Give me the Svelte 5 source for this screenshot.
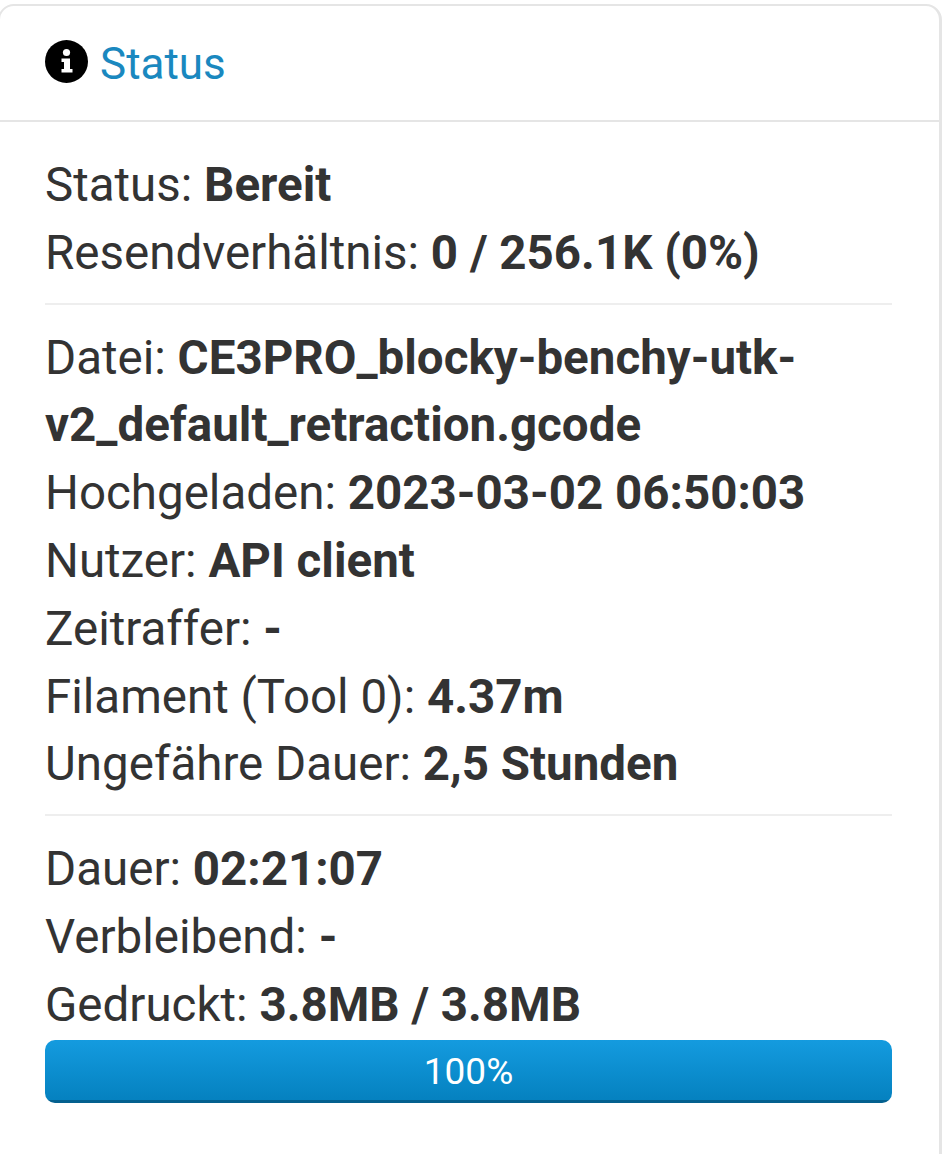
<script>
  const sections = [
    [
      { label: 'Status:', value: 'Bereit' },
      { label: 'Resendverhältnis:', value: '0 / 256.1K (0%)' }
    ],
    [
      { label: 'Datei:', value: 'CE3PRO_blocky-benchy-utk-v2_default_retraction.gcode' },
      { label: 'Hochgeladen:', value: '2023-03-02 06:50:03' },
      { label: 'Nutzer:', value: 'API client' },
      { label: 'Zeitraffer:', value: '-' },
      { label: 'Filament (Tool 0):', value: '4.37m' },
      { label: 'Ungefähre Dauer:', value: '2,5 Stunden' }
    ],
    [
      { label: 'Dauer:', value: '02:21:07' },
      { label: 'Verbleibend:', value: '-' },
      { label: 'Gedruckt:', value: '3.8MB / 3.8MB' }
    ]
  ];
</script>

<div class="page">
  <div class="card">
    <div class="heading">
      <svg class="icon" viewBox="0 0 43 43" width="43" height="43">
        <circle cx="21.5" cy="21.5" r="21.5" fill="#000" />
        <circle cx="21.5" cy="12.5" r="3.6" fill="#fff" />
        <path d="M16.5 18.5h8.5v10.5h2.5v3.5h-11v-3.5h2.5v-7h-2.5z" fill="#fff" />
      </svg>
      <span class="title">Status</span>
    </div>
    <div class="body">
      {#each sections as rows, i}
        {#if i > 0}<hr />{/if}
        <div class="rows">
          {#each rows as row}
            <div class="row">{row.label} <strong>{row.value}</strong></div>
          {/each}
        </div>
      {/each}
      <div class="progress"><div class="bar">100%</div></div>
    </div>
  </div>
</div>

<style>
  :global(body) {
    background: #fff;
  }

  .page {
    width: 943px;
    height: 1154px;
    overflow: hidden;
    background: #fff;
    font-family: Roboto, "Liberation Sans", sans-serif;
    color: #333;
  }

  /* the left edge of the card is cut off by the screenshot */
  .card {
    margin: 4px 0 0 -2px;
    width: 944px;
    height: 1170px;
    box-sizing: border-box;
    border: 2px solid #e5e5e5;
    border-right-width: 3px;
    border-radius: 16px;
  }

  .heading {
    height: 116px;
    box-sizing: border-box;
    padding-left: 45px;
    display: flex;
    align-items: center;
    gap: 12px;
    border-bottom: 2px solid #e5e5e5;
  }

  .icon {
    flex: none;
    margin-top: -3px;
  }

  .title {
    font-size: 44px;
    margin-top: 2px;
    color: #1a88bf;
  }

  .body {
    padding: 30px 47px 0 45px;
    font-size: 47.5px;
    line-height: 67.8px;
  }

  hr {
    margin: 15px 0 20px;
    border: 0;
    border-top: 2px solid #eee;
  }

  strong {
    font-weight: 700;
  }

  .progress {
    height: 63px;
    border-radius: 10px;
    overflow: hidden;
    background: #eee;
  }

  .bar {
    height: 100%;
    text-align: center;
    font-size: 37px;
    line-height: 63px;
    color: #fff;
    background: linear-gradient(to bottom, #149bdf, #0480be);
    box-shadow: inset 0 -3px 0 rgba(0, 0, 0, 0.25);
  }
</style>
